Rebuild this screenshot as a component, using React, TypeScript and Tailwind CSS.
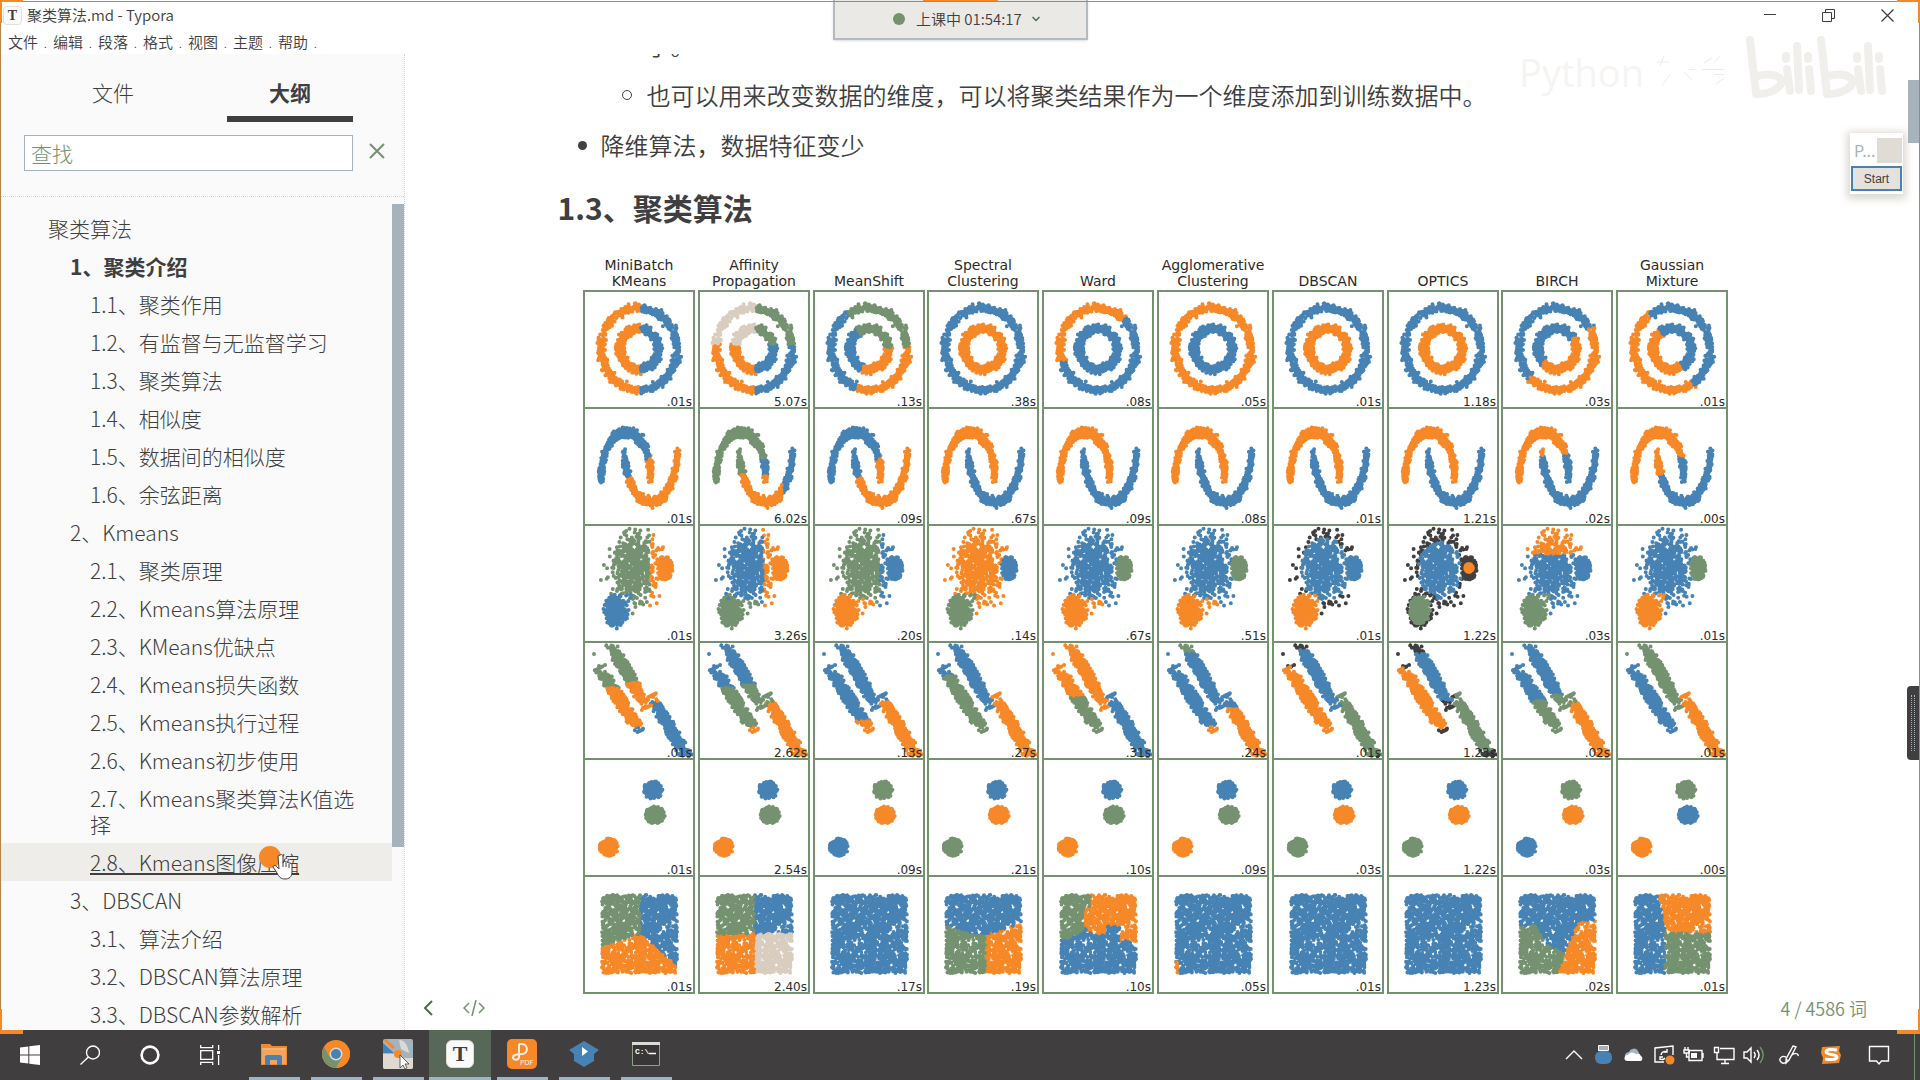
import React from "react";

const ORANGE = "#f78828";
const BLUE = "#4682b4";
const GREEN = "#74926f";
const DARK = "#403e3f";
const PALE = "#d9cdc0";

type Pt = { x: number; y: number; k: number };

function makeRandom(seed: number) {
  let s = seed;
  const uniform = () => {
    s = (s + 0x6d2b79f5) | 0;
    let t = Math.imul(s ^ (s >>> 15), 1 | s);
    t = (t + Math.imul(t ^ (t >>> 7), 61 | t)) ^ t;
    return ((t ^ (t >>> 14)) >>> 0) / 4294967296;
  };
  const normal = () =>
    Math.sqrt(-2 * Math.log(1 - uniform())) * Math.cos(2 * Math.PI * uniform());
  return { uniform, normal };
}

const clamp = (v: number, m: number) => Math.max(-m, Math.min(m, v));

function circles(): Pt[] {
  const { uniform, normal } = makeRandom(11);
  const out: Pt[] = [];
  for (let i = 0; i < 1500; i++) {
    const k = i % 2;
    const a = uniform() * Math.PI * 2;
    const r = k === 0 ? 1 : 0.5;
    out.push({
      x: 55 + 38 * (r * Math.cos(a) + 0.05 * clamp(normal(), 2.3)),
      y: 58 + 41 * (r * Math.sin(a) + 0.05 * clamp(normal(), 2.3)),
      k,
    });
  }
  return out;
}

function moons(): Pt[] {
  const { uniform, normal } = makeRandom(23);
  const out: Pt[] = [];
  for (let i = 0; i < 1300; i++) {
    const k = i % 2;
    const a = uniform() * Math.PI;
    const nx = 1.2 * clamp(normal(), 2.3);
    const ny = 2.6 * clamp(normal(), 2.3);
    out.push(
      k === 0
        ? { x: 42 + 25 * Math.cos(a) + nx, y: 71 - 47 * Math.sin(a) + ny, k }
        : { x: 67 + 26 * Math.cos(a) + nx, y: 45 + 49 * Math.sin(a) + ny, k }
    );
  }
  return out;
}

function varied(): Pt[] {
  const { normal } = makeRandom(37);
  const shapes = [
    [51, 43, 12, 17],
    [81, 43, 3, 5],
    [32, 86, 5, 7],
  ];
  const out: Pt[] = [];
  for (let i = 0; i < 1650; i++) {
    const k = i % 3;
    const [cx, cy, sx, sy] = shapes[k];
    const nx = normal();
    const ny = normal();
    if (Math.hypot(nx, ny) > (k === 0 ? 3 : 2.6)) continue;
    const x = cx + sx * nx;
    const y = cy + sy * ny;
    if (y > 3 && y < 113) out.push({ x, y, k });
  }
  return out;
}

function stretched(): Pt[] {
  const { normal } = makeRandom(41);
  const lines = [
    [26, 2, 63, 65],
    [16, 26, 55, 89],
    [67, 54, 103, 115],
  ];
  const out: Pt[] = [];
  for (let i = 0; i < 1500; i++) {
    const k = i % 3;
    const [x1, y1, x2, y2] = lines[k];
    const t = 0.5 + 0.24 * clamp(normal(), 2.1);
    const n = 2.4 * clamp(normal(), 2.2);
    out.push({ x: x1 + (x2 - x1) * t + n, y: y1 + (y2 - y1) * t - n * 0.5, k });
  }
  out.push({ x: 10, y: 12, k: 3 }, { x: 15, y: 24, k: 1 });
  return out.filter((p) => p.y > 3 && p.y < 115);
}

function blobs(): Pt[] {
  const { normal } = makeRandom(53);
  const centres = [
    [69, 31],
    [71, 56],
    [25, 88],
  ];
  const out: Pt[] = [];
  for (let i = 0; i < 1400; i++) {
    const k = i % 3;
    const nx = normal();
    const ny = normal();
    if (Math.hypot(nx, ny) > 2.6) continue;
    out.push({ x: centres[k][0] + 3.8 * nx, y: centres[k][1] + 3.4 * ny, k });
  }
  return out;
}

function square(): Pt[] {
  const { uniform } = makeRandom(67);
  const out: Pt[] = [];
  for (let i = 0; i < 1500; i++) {
    out.push({ x: 18 + uniform() * 75, y: 19 + uniform() * 78, k: 0 });
  }
  return out;
}

const DATASETS = [circles(), moons(), varied(), stretched(), blobs(), square()];

type Paint = (p: Pt) => string;

const angle = (p: Pt) => (Math.atan2(p.y - 58, p.x - 55) * 180) / Math.PI;
const byCluster =
  (...c: string[]): Paint =>
  (p) =>
    c[p.k] ?? c[0];
const isC = (p: Pt) => p.k === 2 || (p.y > 69 && p.x < 48);
const isRest = (p: Pt) => p.k === 2 || (p.y > 74 && p.x < 60);
const spreadA = (p: Pt) => Math.hypot((p.x - 52) / 12, (p.y - 45) / 16);
const spreadC = (p: Pt) => Math.hypot((p.x - 32) / 5, (p.y - 85) / 7);
const nearB = (p: Pt) => p.x > 73 && p.x < 90 && p.y > 31 && p.y < 56;

const ringPaints: Paint[] = [
  (p) => (p.x < 57 ? ORANGE : BLUE),
  (p) => (p.y < 53 ? (p.x < 57 ? PALE : GREEN) : p.x < 57 ? ORANGE : BLUE),
  (p) => {
    const a = angle(p);
    return a > -120 && a < -4 ? GREEN : a >= -4 && a < 106 ? ORANGE : BLUE;
  },
  byCluster(BLUE, ORANGE),
  (p) => (p.k === 0 && (angle(p) > 160 || angle(p) < -48) ? ORANGE : BLUE),
  byCluster(ORANGE, BLUE),
  byCluster(BLUE, ORANGE),
  byCluster(BLUE, ORANGE),
  (p) => (angle(p) > -32 && angle(p) < 133 ? ORANGE : BLUE),
  (p) => (angle(p) > -122 && angle(p) < 58 ? BLUE : ORANGE),
];

const moonSplit: Paint = (p) => (p.x + p.y > 113 ? ORANGE : BLUE);
const moonPair = byCluster(ORANGE, BLUE);
const moonPaints: Paint[] = [
  moonSplit,
  (p) => {
    if (p.k === 0) return p.x > 56 && p.y > 50 ? (p.y > 68 ? ORANGE : BLUE) : GREEN;
    return p.x > 83 ? BLUE : p.y < 67 ? GREEN : ORANGE;
  },
  moonSplit,
  moonPair,
  moonPair,
  moonPair,
  moonPair,
  moonPair,
  (p) =>
    p.k === 0
      ? p.x > 50 && p.y > 45
        ? BLUE
        : ORANGE
      : p.x < 50 && p.y < 47
        ? ORANGE
        : BLUE,
  (p) =>
    p.k === 0
      ? p.x > 50 && p.y > 48
        ? BLUE
        : ORANGE
      : p.x < 52 && p.y < 66
        ? ORANGE
        : BLUE,
];

const variedPaints: Paint[] = [
  (p) => (isC(p) ? BLUE : p.x > 66 ? ORANGE : GREEN),
  (p) => (isRest(p) ? GREEN : p.x > 64 ? ORANGE : BLUE),
  (p) => (isRest(p) ? ORANGE : p.x > 66 ? BLUE : GREEN),
  (p) => (isC(p) ? GREEN : p.k === 1 ? BLUE : ORANGE),
  (p) => (isRest(p) ? ORANGE : p.k === 1 ? GREEN : BLUE),
  (p) => (isRest(p) ? ORANGE : p.k === 1 ? GREEN : BLUE),
  (p) =>
    p.k === 1 || nearB(p)
      ? BLUE
      : isC(p) && spreadC(p) < 3
        ? ORANGE
        : spreadA(p) > 2
          ? DARK
          : BLUE,
  (p) => {
    if (p.k === 1) return Math.hypot(p.x - 81, p.y - 43) < 4 ? ORANGE : DARK;
    if (isC(p)) return spreadC(p) < 2.1 ? GREEN : DARK;
    return spreadA(p) > 1.8 ? DARK : BLUE;
  },
  (p) => (isC(p) ? GREEN : p.y < 29 && p.k === 0 ? ORANGE : BLUE),
  (p) => (isC(p) ? ORANGE : p.k === 1 ? GREEN : BLUE),
];

const stretchedPaints: Paint[] = [
  (p) => {
    if (p.k === 2) return p.y < 59 ? ORANGE : BLUE;
    if (p.k === 1) return p.y < 46 ? GREEN : p.y < 84 ? ORANGE : BLUE;
    return p.y < 41 ? GREEN : ORANGE;
  },
  (p) => {
    if (p.k === 2) return p.y < 60 ? GREEN : ORANGE;
    if (p.k === 1) return p.y < 46 ? BLUE : p.y < 84 ? GREEN : ORANGE;
    return p.y < 43 ? BLUE : GREEN;
  },
  (p) => (p.k === 2 ? (p.y < 59 ? BLUE : ORANGE) : p.k === 1 && p.y > 79 ? ORANGE : BLUE),
  (p) => (p.k === 2 ? ORANGE : p.k === 1 && p.y > 34 ? GREEN : BLUE),
  (p) => (p.k === 2 ? BLUE : p.k === 1 && p.y > 56 ? GREEN : ORANGE),
  (p) =>
    p.k === 2 ? (p.y < 67 ? BLUE : ORANGE) : p.k === 1 && p.y > 85 ? ORANGE : p.y < 12 ? GREEN : BLUE,
  (p) =>
    p.k === 3 || (p.k === 0 && p.y < 8) || (p.k === 1 && p.y < 25) || p.y > 113
      ? DARK
      : [BLUE, ORANGE, GREEN][p.k],
  (p) => {
    if (p.k === 3) return DARK;
    if (p.k === 0) return p.y < 12 || p.y > 58 ? DARK : BLUE;
    if (p.k === 1) return p.y > 86 || p.y < 26 ? DARK : ORANGE;
    return p.y > 108 || (p.y < 57 && p.x < 68) ? DARK : GREEN;
  },
  (p) =>
    p.k === 2 ? (p.y < 60 ? GREEN : ORANGE) : p.y > (p.k === 0 ? 53 : 59) ? GREEN : BLUE,
  (p) => (p.k === 2 ? ORANGE : p.k === 1 ? BLUE : GREEN),
];

const blobPaints: Paint[] = [
  byCluster(BLUE, GREEN, ORANGE),
  byCluster(BLUE, GREEN, ORANGE),
  byCluster(GREEN, ORANGE, BLUE),
  byCluster(BLUE, ORANGE, GREEN),
  byCluster(BLUE, GREEN, ORANGE),
  byCluster(BLUE, GREEN, ORANGE),
  byCluster(BLUE, ORANGE, GREEN),
  byCluster(BLUE, ORANGE, GREEN),
  byCluster(GREEN, ORANGE, BLUE),
  byCluster(GREEN, BLUE, ORANGE),
];

const squarePaints: Paint[] = [
  ({ x, y }) =>
    y > 58 + (x < 55 ? (55 - x) * 0.3 : (x - 55) * 0.85) ? ORANGE : x < 56 ? GREEN : BLUE,
  ({ x, y }) => (y < 58 ? (x < 55 ? GREEN : BLUE) : x < 57 ? ORANGE : PALE),
  () => BLUE,
  ({ x, y }) =>
    y < (x < 50 ? 50 + (x - 16) * 0.29 : 60 - (x - 50) * 0.28) ? BLUE : x < 57 ? GREEN : ORANGE,
  ({ x, y }) => {
    if (x < 40 || (x < 47 && y < 30)) return y < 63 - Math.max(0, x - 25) * 0.6 ? GREEN : BLUE;
    const limit = x < 48 ? 48 + (x - 40) * 1.2 : x < 64 ? 59 : x < 77 ? 50 : 65;
    return y < limit ? ORANGE : BLUE;
  },
  ({ x, y }) => (x < 20 && y > 86 ? ORANGE : BLUE),
  () => BLUE,
  () => BLUE,
  ({ x, y }) => {
    if (y > 45 && x > 76 - (y - 45) * 0.4) return ORANGE;
    const limit = x < 34 ? 50 : x < 43 ? 50 + (x - 34) * 2 : 68 + (x - 43) * 0.5;
    return y > limit ? GREEN : BLUE;
  },
  ({ x, y }) => (x < 41 + (y < 60 ? (y - 17) * 0.18 : 7) ? BLUE : y < 57 ? ORANGE : GREEN),
];

const PAINTS = [ringPaints, moonPaints, variedPaints, stretchedPaints, blobPaints, squarePaints];

const COLUMNS = [
  ["MiniBatch", "KMeans"],
  ["Affinity", "Propagation"],
  ["MeanShift"],
  ["Spectral", "Clustering"],
  ["Ward"],
  ["Agglomerative", "Clustering"],
  ["DBSCAN"],
  ["OPTICS"],
  ["BIRCH"],
  ["Gaussian", "Mixture"],
];

const TIMES = [
  [".01s", "5.07s", ".13s", ".38s", ".08s", ".05s", ".01s", "1.18s", ".03s", ".01s"],
  [".01s", "6.02s", ".09s", ".67s", ".09s", ".08s", ".01s", "1.21s", ".02s", ".00s"],
  [".01s", "3.26s", ".20s", ".14s", ".67s", ".51s", ".01s", "1.22s", ".03s", ".01s"],
  [".01s", "2.62s", ".13s", ".27s", ".31s", ".24s", ".01s", "1.23s", ".02s", ".01s"],
  [".01s", "2.54s", ".09s", ".21s", ".10s", ".09s", ".03s", "1.22s", ".03s", ".00s"],
  [".01s", "2.40s", ".17s", ".19s", ".10s", ".05s", ".01s", "1.23s", ".02s", ".01s"],
];

function Scatter({ row, col }: { row: number; col: number }) {
  const groups: Record<string, string> = {};
  for (const p of DATASETS[row]) {
    const c = PAINTS[row][col](p);
    groups[c] = (groups[c] ?? "") + `M${p.x.toFixed(1)} ${p.y.toFixed(1)}h0`;
  }
  const layers = Object.entries(groups).sort(([a], [b]) => (a === DARK ? -1 : b === DARK ? 1 : 0));
  return (
    <>
      {layers.map(([c, d]) => (
        <path key={c} d={d} stroke={c} strokeWidth={4} strokeLinecap="round" fill="none" />
      ))}
    </>
  );
}

function ClusterChart() {
  return (
    <svg viewBox="0 0 1204 748" className="mt-[23px] w-full" role="img" aria-label="聚类算法">
      {COLUMNS.map((title, col) => (
        <g key={col} transform={`translate(${Math.round(26 + col * 114.8)} 0)`}>
          {title.map((line, i) => (
            <text
              key={line}
              x={55}
              y={title.length === 2 && i === 0 ? 22 : 38}
              textAnchor="middle"
              className="fill-[#2b2a2b] font-['DejaVu_Sans'] text-[14px]"
            >
              {line}
            </text>
          ))}
          {TIMES.map((r, row) => (
            <g key={row} transform={`translate(0 ${43 + row * 117})`}>
              <Scatter row={row} col={col} />
              <rect width={110} height={117} fill="none" stroke={GREEN} strokeWidth={2} />
              <text x={108} y={115} textAnchor="end" className="fill-[#2b2a2b] font-['DejaVu_Sans'] text-[12px]">
                {r[col]}
              </text>
            </g>
          ))}
        </g>
      ))}
    </svg>
  );
}

const OUTLINE: { text: string; level: number; bold?: boolean; hover?: boolean }[] = [
  { text: "聚类算法", level: 0 },
  { text: "1、聚类介绍", level: 1, bold: true },
  { text: "1.1、聚类作用", level: 2 },
  { text: "1.2、有监督与无监督学习", level: 2 },
  { text: "1.3、聚类算法", level: 2 },
  { text: "1.4、相似度", level: 2 },
  { text: "1.5、数据间的相似度", level: 2 },
  { text: "1.6、余弦距离", level: 2 },
  { text: "2、Kmeans", level: 1 },
  { text: "2.1、聚类原理", level: 2 },
  { text: "2.2、Kmeans算法原理", level: 2 },
  { text: "2.3、KMeans优缺点", level: 2 },
  { text: "2.4、Kmeans损失函数", level: 2 },
  { text: "2.5、Kmeans执行过程", level: 2 },
  { text: "2.6、Kmeans初步使用", level: 2 },
  { text: "2.7、Kmeans聚类算法K值选择", level: 2 },
  { text: "2.8、Kmeans图像压缩", level: 2, hover: true },
  { text: "3、DBSCAN", level: 1 },
  { text: "3.1、算法介绍", level: 2 },
  { text: "3.2、DBSCAN算法原理", level: 2 },
  { text: "3.3、DBSCAN参数解析", level: 2 },
];

const INDENT = ["pl-12", "pl-[70px]", "pl-[90px]"];

function TitleBar() {
  return (
    <header className="flex h-[54px] shrink-0 flex-col">
      <div className="flex h-[30px] items-center">
        <span className="ml-[3px] flex h-[19px] w-[19px] items-center justify-center rounded border border-[#e3dfd9] bg-[#fafafa] font-['Liberation_Serif'] text-[14px] font-bold">
          T
        </span>
        <h1 className="ml-[5px] text-[15px] font-[350] leading-7">聚类算法.md - Typora</h1>
        <div className="ml-auto mr-[26px] flex h-7 items-center gap-[46px]">
          <button aria-label="最小化">
            <svg width="12" height="12" viewBox="0 0 12 12">
              <path d="M0 5.5h12" stroke={DARK} />
            </svg>
          </button>
          <button aria-label="还原">
            <svg width="13" height="13" viewBox="0 0 13 13" fill="none" stroke={DARK}>
              <path d="M.5 3.5h9v9h-9zM3.5 3V.5h9v9H10" />
            </svg>
          </button>
          <button aria-label="关闭">
            <svg width="13" height="13" viewBox="0 0 13 13" fill="none" stroke={DARK} strokeWidth="1.3">
              <path d="M.5 .5l12 12M12.5 .5l-12 12" />
            </svg>
          </button>
        </div>
      </div>
      <nav className="flex h-6 items-center pl-2 text-[15px] font-[350] leading-6">
        {["文件", "编辑", "段落", "格式", "视图", "主题", "帮助"].map((m) => (
          <button key={m} className="flex w-[45px] items-end gap-[6px]">
            {m}
            <span aria-hidden="true" className="text-[10px] leading-5">
              .
            </span>
          </button>
        ))}
      </nav>
    </header>
  );
}

function Sidebar() {
  return (
    <aside className="flex w-[405px] shrink-0 flex-col border-r border-dotted border-[#d9d3ca] bg-[#fafafa] text-[21px] font-light leading-[26px]">
      <div className="flex shrink-0 pl-[50px]">
        <button className="h-[68px] w-[126px] pt-2">文件</button>
        <button className="ml-[51px] h-[68px] w-[126px] border-b-[6px] border-[#403e3f] pt-[14px] font-bold">大纲</button>
      </div>
      <div className="mt-[13px] flex h-[62px] shrink-0 items-start border-b border-dotted border-[#d9d3ca] pl-6">
        <input
          aria-label="查找"
          placeholder="查找"
          className="h-9 w-[329px] border border-[#a7b3bc] bg-white px-[6px] placeholder:text-[#74926f] focus:outline-none"
        />
        <button aria-label="清除" className="ml-4 mt-2">
          <svg width="16" height="16" viewBox="0 0 16 16" stroke={GREEN} strokeWidth="2" fill="none">
            <path d="M1 1l14 14M15 1L1 15" />
          </svg>
        </button>
      </div>
      <div className="mt-[7px] flex min-h-0 flex-1 items-start overflow-hidden">
        <ul className="flex-1 pt-[5px]">
          {OUTLINE.map((o) => (
            <li key={o.text} className={`py-[6px] pr-6 ${INDENT[o.level]} ${o.hover ? "bg-[#efede9]" : ""}`}>
              <a
                href="#outline"
                className={
                  o.hover ? "underline decoration-2 underline-offset-2" : o.bold ? "font-bold" : "no-underline"
                }
              >
                {o.text}
              </a>
            </li>
          ))}
        </ul>
        <div className="h-[643px] w-3 bg-[#a7b3bc]" />
      </div>
    </aside>
  );
}

function Editor() {
  return (
    <main className="relative flex min-w-0 flex-1 flex-col overflow-hidden bg-white pr-[6px]">
      <article className="mx-auto -mt-[27px] w-full max-w-[1204px] text-[24px] leading-9">
        <ul className="flex flex-col gap-[14px] font-[350]">
          <li className="pl-[89px]">了。</li>
          <li className="flex items-center pl-[64px]">
            <span className="mr-[15px] h-[10px] w-[10px] rounded-full border border-[#403e3f]" />
            也可以用来改变数据的维度，可以将聚类结果作为一个维度添加到训练数据中。
          </li>
          <li className="flex items-center pl-5">
            <span className="mr-[14px] h-[9px] w-[9px] rounded-full bg-[#403e3f]" />
            降维算法，数据特征变少
          </li>
        </ul>
        <h2 className="mt-[26px] text-[30px] font-bold leading-9">1.3、聚类算法</h2>
        <ClusterChart />
      </article>
      <footer className="absolute inset-x-0 bottom-0 flex h-[42px] items-center pb-[2px] pl-[18px] pr-[53px] text-[#74926f]">
        <button aria-label="折叠侧栏">
          <svg width="10" height="16" viewBox="0 0 10 16" fill="none" stroke="#4f6b4d" strokeWidth="2">
            <path d="M9 1L2 8l7 7" />
          </svg>
        </button>
        <button aria-label="源代码模式" className="ml-[30px]">
          <svg width="22" height="16" viewBox="0 0 22 16" fill="none" stroke={GREEN} strokeWidth="1.5">
            <path d="M6 3L1 8l5 5M16 3l5 5-5 5M13 0L9 16" />
          </svg>
        </button>
        <span className="ml-auto text-[18px] font-[350]">4 / 4586 词</span>
      </footer>
    </main>
  );
}

function Tile({ label, active, children }: { label: string; active?: boolean; children: React.ReactNode }) {
  return (
    <button
      aria-label={label}
      className={`flex h-full w-[62px] flex-col items-center ${active ? "bg-[#586858]" : ""}`}
    >
      <span className="flex flex-1 items-center pt-[1px]">{children}</span>
      <span className={`h-[3px] bg-[#9db4c6] ${active ? "w-full" : "w-[51px]"}`} />
    </button>
  );
}

function Tray({ label, size, children }: { label: string; size: string; children: React.ReactNode }) {
  return (
    <button aria-label={label} className={`flex h-full items-center justify-center ${size}`}>
      <svg width="22" height="22" viewBox="0 0 22 22" fill="none" stroke="#fff" strokeWidth="1.4">
        {children}
      </svg>
    </button>
  );
}

function Taskbar() {
  return (
    <footer className="flex h-[50px] shrink-0 bg-[#403e3f]">
      <button aria-label="开始" className="flex w-[60px] items-center justify-center">
        <svg width="20" height="20" viewBox="0 0 20 20" fill="#fff">
          <path d="M0 2.6l8.3-1.2v8H0zM9.3 1.2L20 0v9.4H9.3zM0 10.4h8.3v8.2L0 17.4zM9.3 10.4H20V20L9.3 18.7z" />
        </svg>
      </button>
      <button aria-label="搜索" className="flex w-[60px] items-center justify-center">
        <svg width="20" height="20" viewBox="0 0 20 20" fill="none" stroke="#fff" strokeWidth="1.4">
          <circle cx="13" cy="7.5" r="6.5" />
          <path d="M8.4 12L.5 19.5" />
        </svg>
      </button>
      <button aria-label="Cortana" className="flex w-[60px] items-center justify-center">
        <svg width="20" height="20" viewBox="0 0 20 20" fill="none" stroke="#fff" strokeWidth="2.6">
          <circle cx="10" cy="10" r="8.4" />
        </svg>
      </button>
      <button aria-label="任务视图" className="mr-[3px] flex w-[60px] items-center justify-center">
        <svg width="20" height="20" viewBox="0 0 20 20" fill="none" stroke="#fff" strokeWidth="1.3">
          <path d="M.7 5.7h12v8.6H.7zM.7 0v2.7h12V0M.7 20v-2.7h12V20M18.6 0v5M18.6 10v10" />
          <path d="M17 6h3v3h-3z" fill="#fff" stroke="none" />
        </svg>
      </button>
      <Tile label="文件资源管理器">
        <svg width="26" height="23" viewBox="0 0 26 23">
          <path d="M0 1h9l2 2h15v19H0z" fill={ORANGE} />
          <path d="M1 5h24v5H1z" fill="#f3b274" />
          <path d="M1 7h24v14H1z" fill="#f2a55c" />
          <path d="M4 22v-9l2-1h13l2 1v9h-5v-5H9v5z" fill={BLUE} />
        </svg>
      </Tile>
      <Tile label="Chrome">
        <svg width="28" height="28" viewBox="0 0 28 28">
          <circle cx="14" cy="14" r="14" fill={ORANGE} />
          <path d="M1.9 7A14 14 0 0 0 14 28l6-10.5-12 0z" fill={GREEN} />
          <path d="M14 28a14 14 0 0 0 12.6-20H14l6 9.5z" fill={ORANGE} />
          <circle cx="14" cy="14" r="6.5" fill="#d9dde0" />
          <circle cx="14" cy="14" r="5" fill={BLUE} />
        </svg>
      </Tile>
      <Tile label="画图">
        <svg width="30" height="30" viewBox="0 0 30 30">
          <rect width="30" height="30" rx="2" fill="#a7b3bc" />
          <path d="M0 15h15v15H2a2 2 0 0 1-2-2zM15 19h15v9a2 2 0 0 1-2 2H15z" fill="#e0d9d0" />
          <path d="M0 4l11 10H0z" fill={BLUE} />
          <path d="M16 1c6 0 9 6 10 13l-8-4z" fill="#dcdad6" />
          <path d="M2 1l9 8" stroke={ORANGE} strokeWidth="3" />
          <circle cx="15" cy="15" r="4" fill={ORANGE} />
          <path d="M17 16v13l3-3 2 4 2-1-2-4h4z" fill="#fff" stroke={DARK} strokeWidth=".8" />
        </svg>
      </Tile>
      <Tile label="Typora" active>
        <span className="flex h-7 w-7 items-center justify-center rounded-md border border-[#dedbd5] bg-[#fafafa] font-['Liberation_Serif'] text-[22px] font-bold leading-none">
          T
        </span>
      </Tile>
      <Tile label="PDF">
        <svg width="30" height="30" viewBox="0 0 30 30">
          <rect width="30" height="30" rx="5" fill={ORANGE} />
          <path
            d="M12 5h3c6 0 7 10 0 10-4 .5-9 0-9 3.5 0 3 6 3 6-.5V5"
            fill="none"
            stroke="#f2efea"
            strokeWidth="2"
          />
          <text x="13" y="26" className="fill-[#f2efea] font-['DejaVu_Sans'] text-[7px]">
            PDF
          </text>
        </svg>
      </Tile>
      <Tile label="视频">
        <svg width="30" height="26" viewBox="0 0 30 26">
          <path d="M15 0l15 9-5 4v7l-10 6-10-6v-7L0 9z" fill={BLUE} />
          <path d="M13 6l6 4.5-6 4.5z" fill="#fff" />
        </svg>
      </Tile>
      <Tile label="命令提示符">
        <svg width="28" height="24" viewBox="0 0 28 24">
          <path d="M.5 .5h27v23H.5z" fill="#383637" stroke="#8fa08b" />
          <path d="M0 0h28v3H0z" fill="#d9dcd8" />
          <text x="3" y="12" className="fill-white font-['Liberation_Mono'] text-[8px] font-bold">
            C:\
          </text>
          <path d="M17 11.5h7" stroke="#fff" strokeWidth="1.5" />
        </svg>
      </Tile>
      <div className="ml-auto mr-[5px] flex border-r border-[#74926f] pr-[9px]">
        <Tray label="显示隐藏的图标" size="w-[30px]">
          <path d="M3 15l8-8 8 8" />
        </Tray>
        <Tray label="USB" size="w-[30px]">
          <path d="M5.5 1.5h10v5h-10z" fill="#a7b3bc" stroke="#fff" strokeWidth="1" />
          <rect x="2" y="7" width="17" height="13" rx="6" fill={BLUE} stroke="none" />
        </Tray>
        <Tray label="OneDrive" size="w-[30px]">
          <path d="M2 13a4 4 0 0 1 4-5 5 5 0 0 1 9-1l2 4z" fill="#a7b3bc" stroke="none" />
          <path d="M4 17a3 3 0 0 1 1-6 5 5 0 0 1 8-1 4 4 0 0 1 5 2 3 3 0 0 1 0 5z" fill="#fff" stroke="none" />
        </Tray>
        <Tray label="更新" size="w-[30px]">
          <path d="M11 18H2V4l18-2v9" />
          <path d="M14 8a4 4 0 0 0-6 3m-1 4a4 4 0 0 0 5-1M14 5v3h-3M7 16v-3h3" />
          <circle cx="17" cy="16" r="4.5" fill={ORANGE} stroke="none" />
        </Tray>
        <Tray label="电池" size="w-[30px]">
          <path d="M6 6.5h13v10H6zM20 9v5" />
          <path d="M8 9h6v5H8z" fill="#fff" stroke="none" />
          <path d="M1 6h5v3H1zM2 3v3M5 3v3M3.5 9v4H6" />
        </Tray>
        <Tray label="网络" size="w-[30px]">
          <path d="M7 4.5h14v11H4V9M12 16v3M8 19.5h8M1.5 3.5h4v5h-4z" />
        </Tray>
        <Tray label="音量" size="w-[30px]">
          <path d="M1 8h3l4-4v14l-4-4H1zM11 8c1.5 2 1.5 4 0 6M14 6c2.5 3 2.5 7 0 10" />
          <path d="M17 3c4 5 4 11 0 16" stroke={GREEN} />
        </Tray>
        <Tray label="Windows Ink" size="w-10">
          <path d="M15 2l3 1-7 13-3 3 0-4zM8 13c-4-2-8 2-5 5s6 0 6-3M14 11c3-3 7-1 6 1" />
        </Tray>
        <Tray label="搜狗输入法" size="w-11">
          <path d="M2 3l18-1-1 5 2 4-2 8-17 1 1-6-2-5z" fill={ORANGE} stroke="none" />
          <path d="M17 6c-4-1-11-1-11 2s11 2 11 5-7 3-12 2" strokeWidth="3" />
        </Tray>
        <Tray label="通知" size="w-[52px]">
          <path d="M1.5 2.5h19v14.5h-7l-2.5 3-2.5-3h-7z" />
        </Tray>
      </div>
    </footer>
  );
}

function ClassTimer() {
  return (
    <button className="absolute left-[833px] top-0 flex h-10 w-[255px] items-center border-2 border-t-0 border-[#b4bbc0] bg-[#ebe9e5] pl-[58px] text-[15px] font-[350] shadow">
      <span className="mr-[11px] h-3 w-3 rounded-full bg-[#74926f]" />
      上课中 01:54:17
      <svg width="8" height="6" viewBox="0 0 8 6" className="ml-[10px]" fill="none" stroke="#4f6b4d" strokeWidth="1.5">
        <path d="M.5 1L4 4.5 7.5 1" />
      </svg>
      <span className="absolute left-[88px] top-0 h-[2px] w-[75px] bg-[#f78828]" />
    </button>
  );
}

function StartWidget() {
  return (
    <section className="absolute right-[17px] top-[133px] w-[53px] bg-white p-[1px] pb-[3px] shadow-[0_2px_8px_3px_#dcd7d0]">
      <div className="flex h-8 items-center justify-between pl-[3px] text-[16px] text-[#a7b3bc]">
        P...
        <button aria-label="关闭" className="h-[25px] w-[25px] bg-[#e0dcd5]" />
      </div>
      <button className="block h-[25px] w-full border-2 border-[#4682b4] bg-[#e5e2dd] font-['Liberation_Sans'] text-[12px] leading-none">
        Start
      </button>
    </section>
  );
}

function Watermark() {
  return (
    <div className="pointer-events-none absolute right-[34px] top-[36px] flex items-start">
      <span className="mt-2 font-['Open_Sans'] text-[38px] leading-[56px] text-[#f6f4f2]">Python</span>
      <svg
        width="90"
        height="40"
        viewBox="0 0 90 40"
        className="ml-2 mr-[2px] mt-4"
        fill="none"
        stroke="#eeebe6"
        strokeWidth="1"
      >
        <path d="M5 10h12M37 17.500h6M50 17.500h22M62 22.500h10M52 11l8-5M62 11l6-7M64 32l8-6M12 4l-4 10M10 34l8-12M32 20l8 8" />
      </svg>
      <svg
        width="142"
        height="62"
        viewBox="0 0 142 62"
        fill="none"
        stroke="#f1efeb"
        strokeWidth="8"
        strokeLinecap="round"
        strokeLinejoin="round"
      >
        <path d="M6 4l6 54c14 0 24-5 26-13-3-6-12-8-25-5" />
        <path d="M43 33l3 22M53 10l2 44M65 33l2 22M42 20l0 3M64 20l0 3" />
        <path d="M77 4l6 54c14 0 24-5 26-13-3-6-12-8-25-5" />
        <path d="M114 33l3 22M124 10l2 44M136 33l2 22M113 20l0 3M135 20l0 3" />
      </svg>
    </div>
  );
}

function Pointer() {
  return (
    <svg className="absolute left-[258px] top-[845px]" width="36" height="36" viewBox="0 0 36 36">
      <circle cx="12" cy="12" r="11" fill={ORANGE} />
      <path
        d="M22 10c2-1 3 0 3 2v6l1-2 2 1 1 0 2 1 1 0 2 1v8c0 5-3 7-7 7s-6-2-8-6l-4-6c0-2 3-2 4 0l2 2-1-13z"
        fill="#fff"
        stroke={DARK}
        strokeWidth="1"
      />
      <path d="M25 18v4M28 18v4M31 19v4" stroke={DARK} strokeWidth="1" />
    </svg>
  );
}

export default function App() {
  return (
    <div className="relative flex h-screen flex-col overflow-hidden bg-white font-['Noto_Sans_CJK_SC',sans-serif] text-[#403e3f]">
      <TitleBar />
      <div className="flex min-h-0 flex-1">
        <Sidebar />
        <Editor />
      </div>
      <Taskbar />
      <Watermark />
      <ClassTimer />
      <StartWidget />
      <Pointer />
      <div className="absolute right-0 top-20 h-[63px] w-3 bg-[#a7b3bc]" />
      <div className="absolute right-0 top-[686px] flex h-[74px] w-[13px] items-center rounded-l bg-[#403e3f] pl-1">
        <span className="h-[56px] w-1 border-x border-dotted border-[#a7b3bc]" />
      </div>
      <div className="pointer-events-none absolute inset-x-0 bottom-[46px] top-0">
        <div className="absolute inset-x-0 bottom-0 top-[1px] border border-b-0 border-[#b98447]" />
        <div className="absolute left-0 top-0 h-[23px] w-[23px] border-l-2 border-t-2 border-[#f78828]" />
        <div className="absolute right-0 top-0 h-[23px] w-[23px] border-r-2 border-t-2 border-[#f78828]" />
        <div className="absolute bottom-0 left-0 h-[25px] w-[23px] border-b-4 border-l-2 border-[#f78828]" />
        <div className="absolute bottom-0 right-0 h-[25px] w-[23px] border-b-4 border-r-2 border-[#f78828]" />
      </div>
    </div>
  );
}
